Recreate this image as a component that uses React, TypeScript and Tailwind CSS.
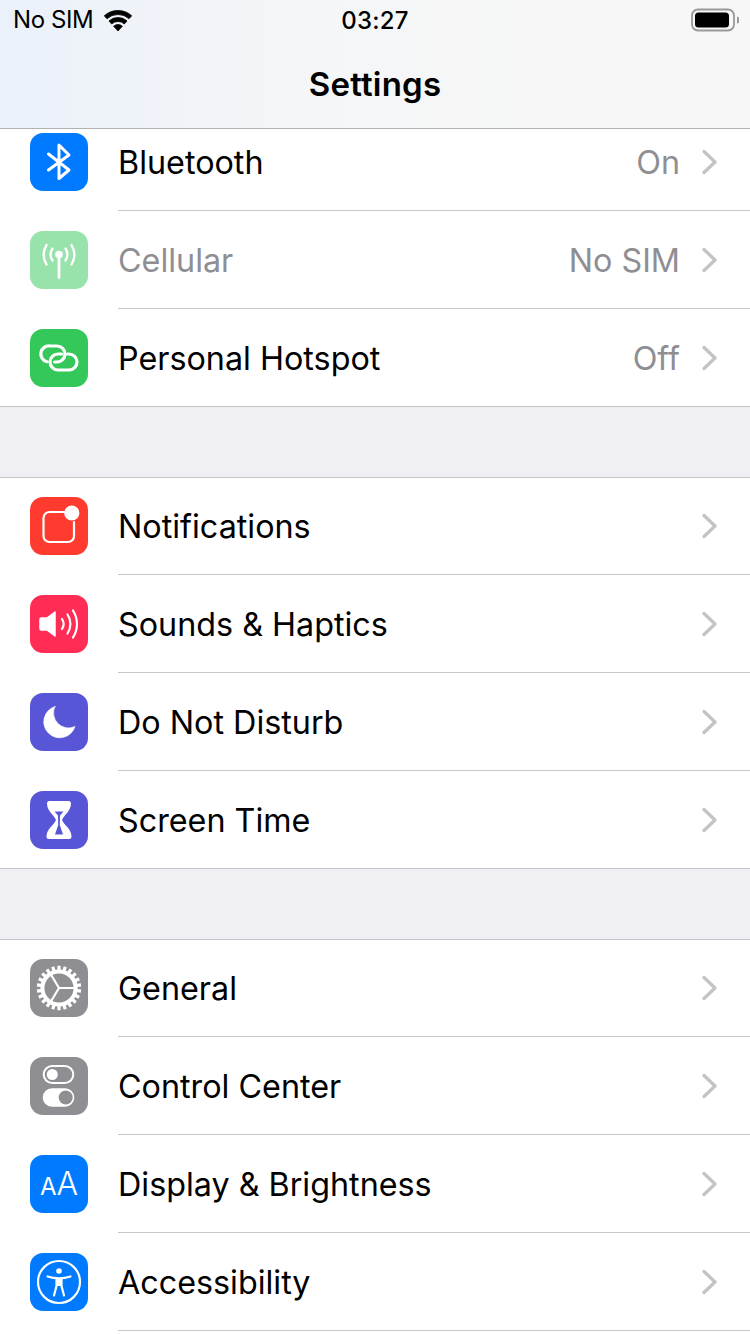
import type { ReactNode } from "react";

const f = "font-['Inter','Liberation_Sans',sans-serif]";

function Box({ color, children, dim, first }: { color: string; children: ReactNode; dim?: boolean; first?: boolean }) {
  return (
    <div className={`relative w-[58px] h-[58px] rounded-[13px] shrink-0 overflow-hidden ${color} ${dim ? "opacity-50" : ""} ${first ? "mb-[1px]" : ""}`}>
      {children}
    </div>
  );
}

function Svg({ children }: { children: ReactNode }) {
  return (
    <svg viewBox="0 0 58 58" width="58" height="58" fill="none" stroke="#fff" strokeLinecap="round" strokeLinejoin="round">
      {children}
    </svg>
  );
}

const Bluetooth = () => (
  <Svg>
    <path d="M18.5 21 39 37 29 45.5V12L39 22 18.5 37" strokeWidth="3" />
  </Svg>
);
const Cellular = () => (
  <Svg>
    <circle cx="29" cy="23.5" r="3.8" fill="#fff" stroke="none" />
    <path d="M29 24V46.5" strokeWidth="2.8" />
    <path d="M22.5 17.5a11 11 0 0 0 0 12M35.5 17.5a11 11 0 0 1 0 12" strokeWidth="2.4" />
    <path d="M16.5 14a19 19 0 0 0 0 19.5M41.5 14a19 19 0 0 1 0 19.5" strokeWidth="2.4" />
  </Svg>
);
const Hotspot = () => (
  <Svg>
    <path d="M17 32.7A8 8 0 0 1 20 17H27A8 8 0 0 1 27 33H24.5" strokeWidth="3.2" />
    <path d="M37.5 25H39A8 8 0 0 1 39 41H28A8 8 0 0 1 28 25H31.5" strokeWidth="3.2" />
  </Svg>
);
const Notifications = () => (
  <Svg>
    <path d="M34 15H19.5a6 6 0 0 0-6 6V39a6 6 0 0 0 6 6H38a6 6 0 0 0 6-6V25" strokeWidth="2.2" />
    <circle cx="41.8" cy="16" r="7.6" fill="#fff" stroke="none" />
  </Svg>
);
const Sounds = () => (
  <Svg>
    <path d="M11.5 23H17L25 17V41L17 35H11.5a1.5 1.5 0 0 1-1.5-1.5v-9A1.5 1.5 0 0 1 11.5 23Z" fill="#fff" strokeWidth="1.5" />
    <path d="M32 24a9 9 0 0 1 0 10" strokeWidth="2.2" />
    <path d="M37.5 19.5a17 17 0 0 1 0 19" strokeWidth="2.2" />
    <path d="M43 15.5a25 25 0 0 1 0 27" strokeWidth="2.2" />
  </Svg>
);
const Moon = () => (
  <Svg>
    <path d="M25 13.5A16 16 0 1 0 45 33.5 15 15 0 0 1 25 13.5Z" fill="#fff" stroke="#fff" strokeWidth="0.6" />
  </Svg>
);
const Hourglass = () => (
  <Svg>
    <path
      d="M19.5 10H38.5A2.5 2.5 0 0 1 41 12.5C41 20 34 24 32 29 34 34 41.5 38 41.5 45.5A2.5 2.5 0 0 1 39 48H19A2.5 2.5 0 0 1 16.5 45.5C16.5 38 24 34 26 29 24 24 17 20 17 12.5A2.5 2.5 0 0 1 19.5 10Z"
      fill="#fff"
      stroke="none"
    />
    <path d="M24.5 20.5H33.5L30 24.5 29.8 34 33 43.5H25L28.2 34 28 24.5Z" fill="#5856d6" stroke="none" />
  </Svg>
);
const General = () => {
  const teeth = Array.from({ length: 22 }, (_, i) => (i * 360) / 22);
  return (
    <Svg>
      <circle cx="29" cy="29" r="16.6" strokeWidth="4" />
      {teeth.map((a) => (
        <path key={a} d="M29 6.8V12" strokeWidth="3.2" strokeLinecap="butt" transform={`rotate(${a} 29 29)`} />
      ))}
      <path d="M29 29H44M29 29 21.5 16.5M29 29 21.5 41.5" strokeWidth="2.2" />
    </Svg>
  );
};
const Control = () => (
  <Svg>
    <rect x="13.7" y="9" width="29.6" height="17" rx="8.5" strokeWidth="2" />
    <circle cx="22.3" cy="17.5" r="5.5" fill="#fff" stroke="none" />
    <rect x="12.7" y="31.3" width="31.6" height="18.4" rx="9.2" fill="#fff" stroke="none" />
    <circle cx="35.7" cy="40.5" r="7" fill="#8e8e93" stroke="none" />
  </Svg>
);
const Accessibility = () => (
  <Svg>
    <circle cx="29" cy="29" r="21" strokeWidth="2.2" />
    <circle cx="29" cy="18" r="2.8" fill="#fff" stroke="none" />
    <path d="M17.5 23.5C22 25 25.5 25.3 29 25.3S36 25 40.5 23.5" strokeWidth="2.2" />
    <path d="M26.5 25.5V33L24 42.5M31.5 25.5V33L34 42.5M26.5 32H31.5" strokeWidth="2.2" />
    <rect x="26.5" y="25" width="5" height="8" fill="#fff" stroke="none" />
  </Svg>
);
const Display = () => (
  <div className="absolute inset-0 flex items-baseline justify-center pt-[13px] text-white font-['Inter',sans-serif] font-light">
    <span className="text-[24px] leading-[32px] font-normal">A</span>
    <span className="text-[32px] leading-[32px]">A</span>
  </div>
);

function Chevron() {
  return (
    <svg width="17" height="26" viewBox="0 0 17 26" fill="none" className="ml-[21px] shrink-0">
      <path d="M3 2.5 14 13 3 23.5" stroke="#c4c4c7" strokeWidth="3.4" strokeLinecap="round" strokeLinejoin="round" />
    </svg>
  );
}

function Row({
  label,
  value,
  icon,
  color,
  dim,
  first,
  last,
}: {
  label: string;
  value?: string;
  icon: ReactNode;
  color: string;
  dim?: boolean;
  first?: boolean;
  last?: boolean;
}) {
  return (
    <div className={`flex items-center pl-[30px] bg-white ${first || last ? "h-[97px]" : "h-[98px]"}`}>
      <Box color={color} dim={dim} first={first}>
        {icon}
      </Box>
      <div className={`flex flex-1 h-full items-center ml-[30px] pr-[32px] ${last ? "" : "border-b border-[#c6c6c8]"}`}>
        <span className={`flex-1 ${first ? "pt-[2px]" : "pt-[4px]"} text-[32.3px] ${dim ? "text-[#8e8e93]" : "text-black"}`}>{label}</span>
        {value && <span className="pt-[4px] text-[32.3px] text-[#8e8e93]">{value}</span>}
        <Chevron />
      </div>
    </div>
  );
}

function band(r1: number, r2: number) {
  const s = 0.669;
  const c = 0.743;
  const ax = 14;
  const ay = 21;
  const p = (r: number, sign: number) => `${ax + sign * r * s} ${ay - r * c}`;
  if (r2 === 0) return `M${ax} ${ay}L${p(r1, -1)}A${r1} ${r1} 0 0 1 ${p(r1, 1)}Z`;
  return `M${p(r1, -1)}A${r1} ${r1} 0 0 1 ${p(r1, 1)}L${p(r2, 1)}A${r2} ${r2} 0 0 0 ${p(r2, -1)}Z`;
}

export default function App() {
  return (
    <div className={`w-[750px] h-[1334px] overflow-hidden bg-white flex flex-col ${f}`}>
      <header className="relative z-10 h-[129px] shrink-0 border-b border-[#b2b2b2] bg-gradient-to-r from-[#ebf1fa] via-[#f5f6f7] via-45% to-[#f7f7f7]">
        <div className="h-[40px] flex items-center justify-between pl-[13px] pr-[11px] text-[24px] text-black">
          <div className="flex items-center gap-[11px]">
            <span className="tracking-[-0.4px]">No SIM</span>
            <svg width="28" height="22" viewBox="0 0 28 22" className="mt-[1px]">
              <g fill="#000" stroke="#000" strokeWidth="0.8" strokeLinejoin="round">
                <path d={band(20.5, 16.5)} />
                <path d={band(13.5, 9.5)} />
                <path d={band(6.5, 0)} />
              </g>
            </svg>
          </div>
          <span className="absolute left-0 right-0 top-[6px] text-center font-medium tracking-[0.2px] leading-[29px]">03:27</span>
          <svg width="48" height="24" viewBox="0 0 48 24">
            <rect x="1" y="1.5" width="42" height="21" rx="6" fill="none" stroke="#999999" strokeWidth="1.8" />
            <rect x="4" y="4.5" width="34" height="15" rx="3.5" fill="#000" />
            <path d="M46 8.5a3.6 3.6 0 0 1 0 7Z" fill="#999999" />
          </svg>
        </div>
        <div className="h-[88px] flex items-center justify-center text-[33px] tracking-[0.2px] font-semibold text-black pt-[1px]">
          Settings
        </div>
      </header>
      <div className="flex-1 overflow-hidden">
        <div className="-mt-[16px]">
          <section>
            <Row label="Bluetooth" value="On" color="bg-[#007aff]" icon={<Bluetooth />} />
            <Row label="Cellular" value="No SIM" color="bg-[#34c759]" dim icon={<Cellular />} />
            <Row label="Personal Hotspot" value="Off" color="bg-[#34c759]" last icon={<Hotspot />} />
          </section>
          <div className="h-[70px] bg-[#efeff4] border-y border-[#c6c6c8] box-content" />
          <section>
            <Row label="Notifications" color="bg-[#ff3b30]" first icon={<Notifications />} />
            <Row label="Sounds & Haptics" color="bg-[#ff2d55]" icon={<Sounds />} />
            <Row label="Do Not Disturb" color="bg-[#5856d6]" icon={<Moon />} />
            <Row label="Screen Time" color="bg-[#5856d6]" last icon={<Hourglass />} />
          </section>
          <div className="h-[70px] bg-[#efeff4] border-y border-[#c6c6c8] box-content" />
          <section>
            <Row label="General" color="bg-[#8e8e93]" first icon={<General />} />
            <Row label="Control Center" color="bg-[#8e8e93]" icon={<Control />} />
            <Row label="Display & Brightness" color="bg-[#007aff]" icon={<Display />} />
            <Row label="Accessibility" color="bg-[#007aff]" icon={<Accessibility />} />
          </section>
        </div>
      </div>
    </div>
  );
}
